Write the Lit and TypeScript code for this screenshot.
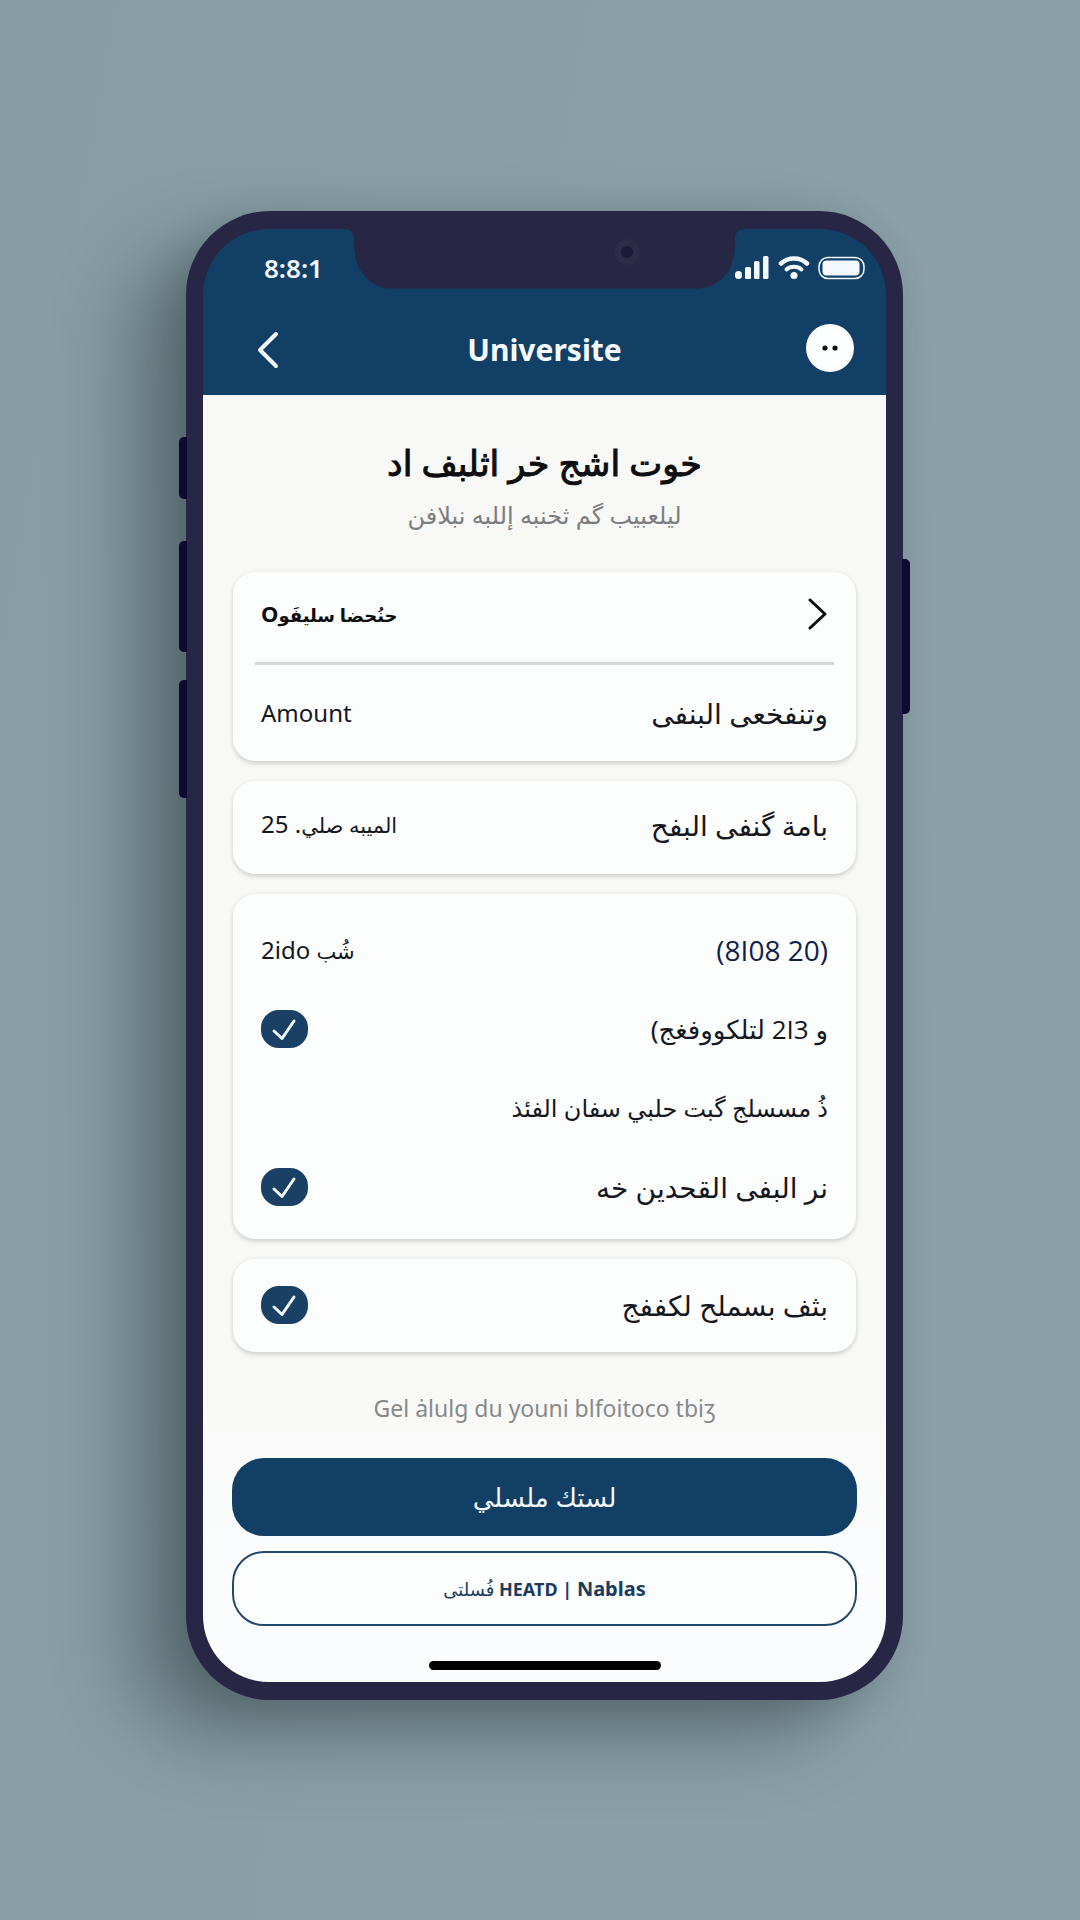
import { LitElement, html, css, nothing } from "lit";
import { customElement, property } from "lit/decorators.js";

@customElement("status-icons")
class StatusIcons extends LitElement {
  static styles = css`
    :host { display: flex; align-items: center; gap: 8px; color: #f4f9ff; }
    svg { display: block; }
  `;
  render() {
    return html`
      <svg width="36" height="24" viewBox="0 0 36 24" fill="currentColor" aria-label="Signal" role="img">
        <rect x="1" y="15" width="7" height="8" rx="3.5"></rect>
        <rect x="11" y="11" width="6" height="12" rx="1.5"></rect>
        <rect x="20" y="5" width="5.500" height="18" rx="1.5"></rect>
        <rect x="29" y="0" width="5.500" height="23" rx="1.5"></rect>
      </svg>
      <svg width="32" height="24" viewBox="0 0 32 24" fill="none" stroke="currentColor" stroke-linecap="round" aria-label="Wi-Fi" role="img">
        <path d="M3 7.500 C10 .8 22 .8 29 7.500" stroke-width="4.500"></path>
        <path d="M8.500 13.500 C12.500 9.800 19.500 9.800 23.500 13.500" stroke-width="4"></path>
        <circle cx="16" cy="19.500" r="3.600" fill="currentColor" stroke="none"></circle>
      </svg>
      <svg width="47" height="24" viewBox="0 0 47 24" aria-label="Battery" role="img">
        <rect x="1" y="1.500" width="45" height="21" rx="9" fill="none" stroke="currentColor" stroke-width="1.500"></rect>
        <rect x="4.500" y="4.500" width="37" height="15" rx="4" fill="currentColor"></rect>
      </svg>
    `;
  }
}

@customElement("check-row")
class CheckRow extends LitElement {
  @property({ type: Boolean }) checked = false;
  static styles = css`
    :host { display: block; }
    .row { display: flex; align-items: center; justify-content: space-between; min-height: 38px; cursor: pointer; }
    .box { display: grid; flex: none; }
    .box > * { grid-area: 1 / 1; }
    .input { appearance: none; width: 47px; height: 38px; margin: 0; border-radius: 18px; border: 2px solid #1a4066; cursor: pointer; }
    .input:checked { background: #1a4066; }
    .mark { pointer-events: none; }
  `;
  render() {
    return html`<label class="row">
      <span class="box">
        <input class="input" type="checkbox" .checked=${this.checked}
          @change=${(e: Event) => (this.checked = (e.target as HTMLInputElement).checked)} />
        ${this.checked
          ? html`<svg class="mark" width="47" height="38" viewBox="0 0 47 38" fill="none" stroke="#f4f9ff" stroke-width="3" stroke-linecap="round" stroke-linejoin="round">
              <path d="M13 21 L21 28.500 L33 11"></path></svg>`
          : nothing}
      </span>
      <slot></slot>
    </label>`;
  }
}

@customElement("app-root")
class AppRoot extends LitElement {
  static styles = css`
    :host {
      display: block;
      font-family: "Noto Sans", "DejaVu Sans", sans-serif;
      color: #15171f;
      --navy: #113f66;
      --frame: #272645;
    }
    * { box-sizing: border-box; }
    .stage {
      min-height: 100vh;
      padding: 211px 177px 220px 186px;
      background: linear-gradient(100deg, #879da4, #8aa0a7 50%, #8ba1a8);
    }
    .phone {
      position: relative;
      padding: 18px 17px;
      border-radius: 84px;
      background: var(--frame);
      box-shadow: -56px 38px 76px rgba(28, 42, 48, 0.38), -10px 8px 36px rgba(28, 42, 48, 0.18);
    }
    .key { position: absolute; width: 8px; background: #0e0a32; }
    .key-left { left: -7px; border-radius: 5px 0 0 5px; }
    .key-right { right: -7px; border-radius: 0 5px 5px 0; }
    .key-mute { top: 226px; height: 62px; }
    .key-up { top: 330px; height: 111px; }
    .key-down { top: 469px; height: 118px; }
    .key-power { top: 348px; height: 155px; }
    .screen {
      position: relative;
      overflow: hidden;
      border-radius: 66px;
    }
    .notch { position: absolute; top: 0; left: 0; right: 0; margin: 0 auto; display: block; }
    .head { padding: 22px 0 1px; background: var(--navy); color: #f4f9ff; display: grid; gap: 21px; }
    .status { height: 34px; padding: 0 21px 0 61px; display: flex; align-items: center; justify-content: space-between; }
    .time { font-size: 26px; font-weight: 600; line-height: 34px; }
    .nav {
      height: 88px; padding: 0 32px;
      display: grid; grid-template-columns: 1fr auto 1fr; align-items: center;
    }
    .title { margin: 0; font-size: 30px; line-height: 40px; font-weight: 700; }
    .icon-btn { padding: 0; border: 0; background: none; color: inherit; display: block; cursor: pointer; }
    .back { justify-self: start; margin-left: 16px; }
    .more { justify-self: end; border-radius: 24px; }
    .icon-btn svg { display: block; }
    .body { padding: 40px 30px 12px; display: grid; background: linear-gradient(#f8f8f6 75%, #fbfcfd 90%); }
    .h { margin: 0; text-align: center; font-size: 35px; line-height: 56px; font-weight: 500; color: #0c0d10; -webkit-text-stroke: 1px currentColor; }
    .sub { margin: 0 0 33px; text-align: center; font-size: 24px; line-height: 48px; color: #7b7d80; }
    .cards { display: grid; gap: 20px; }
    .card {
      border-radius: 22px;
      background: #fcfdfd;
      box-shadow: 0 3px 4px rgba(60, 60, 60, 0.16), 0 0 5px rgba(60, 60, 60, 0.08);
      padding: 0 28px;
    }
    .row { display: flex; align-items: center; justify-content: space-between; min-height: 93px; padding: 0 0 6px; font-size: 24px; line-height: 40px; }
    .row-link {
      width: 100%; min-height: 90px; border: 0; background: none; color: #0c0d10; cursor: pointer;
      font-family: inherit; font-weight: 700; font-size: 22px;
    }
    .row-tall { min-height: 96px; padding: 0; }
    .tag { font-size: 18px; }
    .mini { font-size: 21px; }
    .wide { font-size: 28px; }
    .mid { font-size: 26px; }
    .rule { height: 3px; margin: 0 -6px; border: 0; background: #d6d7d9; }
    .list { padding-top: 36px; padding-bottom: 32px; display: grid; gap: 39px; }
    .item { display: flex; align-items: center; justify-content: space-between; height: 40px; font-size: 24px; line-height: 40px; }
    .item-end { justify-content: flex-end; }
    .check { line-height: 40px; }
    .single { padding-top: 26px; padding-bottom: 27px; }
    .value { font-family: "Open Sans", sans-serif; font-size: 28px; color: #10204a; }
    .num { font-family: "Open Sans", sans-serif; }
    .note { margin: 38px 0 32px; text-align: center; font-size: 23px; line-height: 36px; color: #87898b; }
    .actions { display: grid; gap: 15px; margin: 0 -1px; }
    .btn { border-radius: 32px; font-family: inherit; cursor: pointer; }
    .primary { height: 78px; border: 0; background: var(--navy); color: #f4f9ff; font-size: 26px; font-weight: 500; }
    .secondary { height: 75px; border: 2px solid #24486b; background: #fcfdfd; color: #1d3b5f; font-size: 18px; font-weight: 700; }
    .name { font-size: 20px; }
    .light { font-weight: 400; }
    .home { width: 232px; max-width: 60%; height: 9px; margin: 35px auto 0; border-radius: 5px; background: #000; }
    @media (max-width: 800px) {
      .stage { padding: 24px; }
    }
  `;

  render() {
    return html`
      <div class="stage">
        <div class="phone">
          <span class="key key-left key-mute"></span>
          <span class="key key-left key-up"></span>
          <span class="key key-left key-down"></span>
          <span class="key key-right key-power"></span>
          <main class="screen">
            <header class="head">
              <div class="status">
                <span class="time">8:8:1</span>
                <status-icons></status-icons>
              </div>
              <nav class="nav">
                <button class="icon-btn back" aria-label="Back">
                  <svg width="36" height="44" viewBox="0 0 36 44" fill="none" stroke="currentColor" stroke-width="4" stroke-linecap="round" stroke-linejoin="round">
                    <path d="M25 6 L9 22 L25 38"></path>
                  </svg>
                </button>
                <h1 class="title">Universite</h1>
                <button class="icon-btn more" aria-label="More">
                  <svg width="48" height="52" viewBox="0 0 48 52">
                    <circle cx="24" cy="24" r="24" fill="#fbfdfe"></circle>
                    <circle cx="19" cy="24" r="2.600" fill="#111"></circle>
                    <circle cx="29" cy="24" r="2.600" fill="#111"></circle>
                  </svg>
                </button>
              </nav>
            </header>
            <svg class="notch" width="401" height="60" viewBox="0 0 401 60">
              <path d="M0 0 Q10 0 10 10 V15 C10 42 26 59.500 48 59.500 H353 C375 59.500 391 42 391 15 V10 Q391 0 401 0 Z" fill="#272645"></path>
              <circle cx="283" cy="23" r="13" fill="#2c2b48"></circle>
              <circle cx="283" cy="23" r="6" fill="#1c1a38"></circle>
            </svg>
            <section class="body">
              <h2 class="h" dir="rtl">خوت اشج خر اثلبف اد</h2>
              <p class="sub" dir="rtl">ليلعبيب گم ثخنبه إللبه نبلافن</p>
              <div class="cards">
                <div class="card">
                  <button class="row row-link">
                    <span>O<bdi class="tag">حنُحضا سليفَو</bdi></span>
                    <svg width="20" height="34" viewBox="0 0 20 34" fill="none" stroke="currentColor" stroke-width="3" stroke-linecap="round" stroke-linejoin="round">
                      <path d="M2 3 L17 17 L2 31"></path>
                    </svg>
                  </button>
                  <hr class="rule" />
                  <div class="row row-tall"><span>Amount</span><span class="wide" dir="rtl">وتنفخعى البنفى</span></div>
                </div>
                <div class="card">
                  <div class="row"><span>25 .<bdi class="mini">الميبه صلي</bdi></span><span class="wide" dir="rtl">بامة گنفى البفح</span></div>
                </div>
                <div class="card list">
                  <div class="item"><span>2ido <bdi class="mini">شُب</bdi></span><span class="value">(8I08 20)</span></div>
                  <check-row class="check" checked><span class="mid" dir="rtl">و <bdi class="num">2I3</bdi> لتلكووفغج)</span></check-row>
                  <div class="item item-end"><span dir="rtl">ذُ مسسلج گبت حلبي سفان الفئذ</span></div>
                  <check-row class="check" checked><span class="wide" dir="rtl">نر البفى القحدين خه</span></check-row>
                </div>
                <div class="card single">
                  <check-row class="check" checked><span class="wide" dir="rtl">بثف بسملح لكففج</span></check-row>
                </div>
              </div>
              <p class="note">Gel ȧlulg du youni blfoitoco tbiʒ</p>
              <div class="actions">
                <button class="btn primary">لستك ملسلي</button>
                <button class="btn secondary"><bdi class="light">فُسلتى</bdi> HEATD | <span class="name">Nablas</span></button>
              </div>
              <div class="home"></div>
            </section>
          </main>
        </div>
      </div>
    `;
  }
}
